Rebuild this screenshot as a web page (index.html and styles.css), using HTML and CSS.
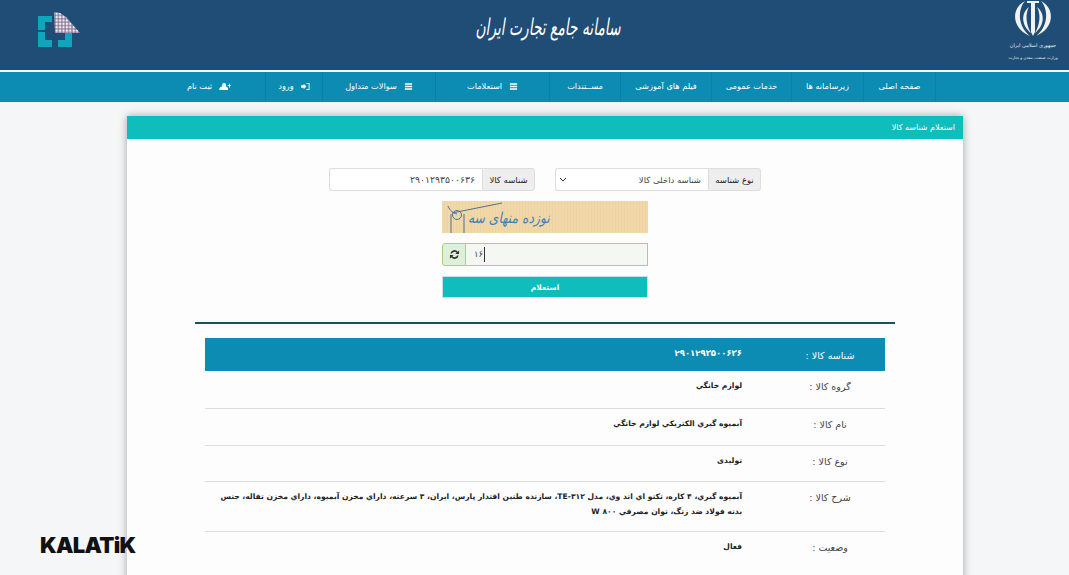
FILE: index.html
```html
<!DOCTYPE html>
<html lang="fa" dir="rtl">
<head>
  <meta charset="UTF-8" />
  <title>استعلام شناسه کالا</title>
  <link rel="stylesheet" href="styles.css">
</head>
<body>
  <header class="top">
    <svg class="emblem" width="50" height="66" viewBox="0 0 50 66">
      <g fill="#f2f2f2">
        <path d="M17 1C3 8 3 28 22 36C10 27 9 10 17 1z"/>
        <path d="M33 1C47 8 47 28 28 36C40 27 41 10 33 1z"/>
        <path d="M21 7C13 13 13 25 23 33C18 25 17 14 21 7z"/>
        <path d="M29 7C37 13 37 25 27 33C32 25 33 14 29 7z"/>
        <path d="M19 1h12v2h-4v29l-2 4-2-4V3h-4z"/>
      </g>
      <text class="emblem-line" x="25" y="47">جمهوری اسلامی ایران</text>
      <text class="emblem-line emblem-line-small" x="25" y="59">وزارت صنعت، معدن و تجارت</text>
    </svg>
    <h1 class="site-title">سامانه جامع تجارت ایران</h1>
    <svg class="logo" width="42" height="35" viewBox="0 0 42 35">
      <defs>
        <pattern id="dots" width="3.400" height="3.400" patternUnits="userSpaceOnUse">
          <circle cx="1.700" cy="1.700" r="1.200" fill="#f6f0f5"/>
        </pattern>
      </defs>
      <path d="M0 4h14v6H7v8H0zM0 20h7v8h7v7H0zM27 21h7v14H20v-7h7z" fill="#0ea5bd"/>
      <path d="M16 0l6 1 6 4 14 16H17z" fill="#8d7f9c"/>
      <path d="M16 0l6 1 6 4 14 16H17z" fill="url(#dots)"/>
    </svg>
  </header>

  <nav class="menu">
    <a>صفحه اصلی</a>
    <a>زیرسامانه ها</a>
    <a>خدمات عمومی</a>
    <a>فیلم های آموزشی</a>
    <a>مســتندات</a>
    <a><svg class="ico" viewBox="0 0 10 10"><path d="M1 1.500h8v1.500H1zM1 4.200h8v1.500H1zM1 7h8v1.500H1z"/></svg>استعلامات</a>
    <a><svg class="ico" viewBox="0 0 10 10"><path d="M1 1.500h8v1.500H1zM1 4.200h8v1.500H1zM1 7h8v1.500H1z"/></svg>سوالات متداول</a>
    <a><svg class="ico" viewBox="0 0 10 10"><path d="M0 3.500h3V2l3 3-3 3V6.500H0zM6 1h3.500v8H6V8h2.500V2H6z"/></svg>ورود</a>
    <a><svg class="ico ico-wide" viewBox="0 0 13 10"><path d="M0 9c0-3 2-4 3.500-4C3 4 3 1 5.500 1S8 4 7.500 5C9 5 10 6 10 9zM9.500 3.500H11V2h1v1.500h1v1h-1V6h-1V4.500H9.500z"/></svg>ثبت نام</a>
  </nav>

  <main class="card">
    <div class="card-head">استعلام شناسه کالا</div>
    <div class="card-body">
      <form class="lookup">
        <div class="field-row">
          <div class="group">
            <span class="addon">نوع شناسه</span>
            <div class="select">
              <span>شناسه داخلی کالا</span>
              <svg width="8" height="6" viewBox="0 0 8 6"><path d="M1 1l3 3 3-3" fill="none" stroke="#333" stroke-width="1"/></svg>
            </div>
          </div>
          <div class="group">
            <span class="addon">شناسه کالا</span>
            <div class="text-input id-input">۲۹۰۱۲۹۳۵۰۰۶۳۶</div>
          </div>
        </div>

        <div class="captcha">
          <span>نوزده منهای سه</span>
          <svg class="captcha-lines" width="206" height="32" viewBox="0 0 206 32">
            <path d="M6 5c2 5 5 7 9 8M10 12L60 2M9 32V13M22 32V13" fill="none" stroke="#4b7396"/>
            <circle cx="15" cy="14" r="4.500" fill="none" stroke="#4b7396"/>
          </svg>
        </div>

        <div class="answer">
          <div class="text-input answer-input"><span class="caret">۱۶</span></div>
          <span class="addon answer-addon">
            <svg width="11" height="11" viewBox="0 0 12 12"><path d="M1.500 5a4.500 4.500 0 0 1 8-2L11 1.500V5.500H7l1.300-1.300A3 3 0 0 0 3.200 5zM10.500 7a4.500 4.500 0 0 1-8 2L1 10.500V6.500h4L3.700 7.800A3 3 0 0 0 8.800 7z" fill="#333"/></svg>
          </span>
        </div>

        <button class="submit" type="button">استعلام</button>
      </form>

      <hr class="divider">

      <table class="result">
        <tr class="result-head">
          <th>شناسه کالا :</th>
          <td>۲۹۰۱۲۹۳۵۰۰۶۳۶</td>
        </tr>
        <tr>
          <th>گروه کالا :</th>
          <td>لوازم خانگي</td>
        </tr>
        <tr>
          <th>نام کالا :</th>
          <td>آبمیوه گیري الکتریکي لوازم خانگي</td>
        </tr>
        <tr>
          <th>نوع کالا :</th>
          <td>تولیدی</td>
        </tr>
        <tr>
          <th>شرح کالا :</th>
          <td>آبمیوه گیري، ۴ کاره، تکنو اي اند وي، مدل TE-۳۱۲، سازنده طنین اقتدار پارس، ایران، ۳ سرعته، داراي مخزن آبمیوه، داراي مخزن تفاله، جنس بدنه فولاد ضد زنگ، توان مصرفي ۸۰۰ W</td>
        </tr>
        <tr>
          <th>وضعیت :</th>
          <td>فعال</td>
        </tr>
      </table>
    </div>
  </main>

  <div class="watermark" dir="ltr">KALATiK</div>
</body>
</html>
```

FILE: styles.css
```css
* {
  box-sizing: border-box;
}

html, body {
  height: 100%;
}

body {
  margin: 0;
  overflow: hidden;
  background: #f4f6f8;
  font-family: "DejaVu Sans", sans-serif;
  font-size: 9px;
  color: #333;
}

.top {
  height: 70px;
  background: #1f4d75;
  display: flex;
  align-items: flex-start;
  justify-content: space-between;
  padding: 0 11px 0 38px;
  position: relative;
}

.emblem-line {
  fill: #e8edf2;
  font-size: 5px;
  text-anchor: middle;
}

.emblem-line-small {
  font-size: 4px;
}

.site-title {
  margin: 9px 0 0;
  font-size: 23px;
  font-weight: normal;
  font-style: italic;
  color: #fff;
  line-height: 36px;
  position: absolute;
  left: 475px;
  width: 146px;
  white-space: nowrap;
  display: flex;
  justify-content: center;
  transform: scaleX(0.6);
}

.logo {
  margin-top: 12px;
}

.menu {
  margin-top: 2px;
  height: 30px;
  background: #0c8bb3;
  padding-right: 133px;
  display: grid;
  grid-template-columns: 73px 72px 80px 91px 71px 114px 113px 57px 112px;
  justify-content: start;
}

.menu a {
  display: flex;
  align-items: center;
  justify-content: center;
  gap: 7px;
  color: #fff;
  font-size: 8.200px;
  padding-bottom: 2px;
  border-left: 1px solid #0a80a5;
}

.menu a:first-child {
  border-right: 1px solid #0a80a5;
}

.menu a:last-child {
  border-left: none;
}

.ico {
  width: 9px;
  height: 9px;
  fill: #fff;
}

.ico-wide {
  width: 12px;
}

.card {
  width: 836px;
  margin: 14px 106px 0 0;
  background: #fdfdfd;
  box-shadow: 0 0 8px rgba(0, 0, 0, 0.35);
}

.card-head {
  height: 23px;
  background: #0fbdbd;
  color: #fff;
  font-size: 8px;
  line-height: 23px;
  padding-right: 8px;
}

.card-body {
  padding: 29px 68px 40px;
}

.lookup {
  display: flex;
  flex-direction: column;
  align-items: center;
}

.field-row {
  display: flex;
  gap: 20px;
  height: 23px;
  margin-bottom: 10px;
}

.group {
  width: 206px;
  display: flex;
}

.addon {
  flex: none;
  width: 53px;
  background: #eeeeee;
  border: 1px solid #ddd;
  border-radius: 0 3px 3px 0;
  display: flex;
  align-items: center;
  justify-content: center;
  font-size: 8.500px;
  color: #222;
}

.select, .text-input {
  flex: 1;
  background: #fff;
  border: 1px solid #ddd;
  border-right: none;
  border-radius: 3px 0 0 3px;
  padding: 0 7px 0 3px;
  display: flex;
  align-items: center;
  font-size: 8.500px;
  color: #444;
}

.select {
  justify-content: space-between;
}

.id-input {
  font-size: 9.300px;
}

.captcha {
  width: 206px;
  height: 32px;
  background: repeating-linear-gradient(90deg, #f0d8a8 0 2px, #eed3a0 2px 3px);
  position: relative;
  color: #3f80b8;
  line-height: 34px;
  white-space: nowrap;
  margin-bottom: 10px;
}

.captcha span {
  position: absolute;
  left: 26px;
  font-size: 15px;
  font-style: italic;
  transform: scaleX(0.82);
  transform-origin: left center;
}

.captcha-lines {
  position: absolute;
  left: 0;
  top: 0;
}

.answer {
  width: 206px;
  height: 23px;
  display: flex;
  margin-bottom: 10px;
}

.answer-addon {
  width: 24px;
  background: #dff0d8;
  border: 1px solid #a3d18d;
  border-radius: 3px 0 0 3px;
}

.answer-input {
  background: #f5f7f2;
  border: 1px solid #a3d18d;
  border-left: none;
  border-radius: 0;
  direction: ltr;
  padding: 0 8px;
}

.caret {
  border-right: 1px solid #333;
  padding-right: 1px;
  line-height: 15px;
}

.submit {
  width: 206px;
  height: 22px;
  background: #0fbdbd;
  border: 1px solid #cde;
  color: #fff;
  font-family: inherit;
  font-size: 7.500px;
  font-weight: bold;
  padding: 0;
}

.divider {
  margin: 24px 0 14px;
  border: none;
  height: 2px;
  background: #1d4f63;
}

.result {
  width: 680px;
  margin: 0 10px;
  border-collapse: collapse;
  table-layout: fixed;
}

.result tr {
  border-bottom: 1px solid #ddd;
}

.result tr:last-child {
  border-bottom: none;
}

.result th {
  width: 110px;
  padding: 7px 0 0;
  font-size: 9.500px;
  font-weight: normal;
  color: #444;
  vertical-align: top;
  text-align: center;
  line-height: 18px;
}

.result td {
  padding: 7px 33px 12px 10px;
  font-size: 7.600px;
  font-weight: bold;
  color: #222;
  vertical-align: top;
  line-height: 15px;
  height: 37px;
}

.result tr:nth-child(4) td {
  height: 36px;
}

.result .result-head {
  background: #0c8bb3;
  border-bottom: none;
}

.result .result-head th,
.result .result-head td {
  color: #fff;
  height: 33px;
  padding-bottom: 0;
}

.result .result-head th {
  padding-top: 9px;
}

.result .result-head td {
  font-size: 8.500px;
  padding-top: 8px;
}

.watermark {
  position: absolute;
  left: 40px;
  top: 530px;
  font-family: Inter, sans-serif;
  font-weight: 900;
  font-size: 22px;
  line-height: 30px;
  color: #111;
  letter-spacing: -0.7px;
}
```
